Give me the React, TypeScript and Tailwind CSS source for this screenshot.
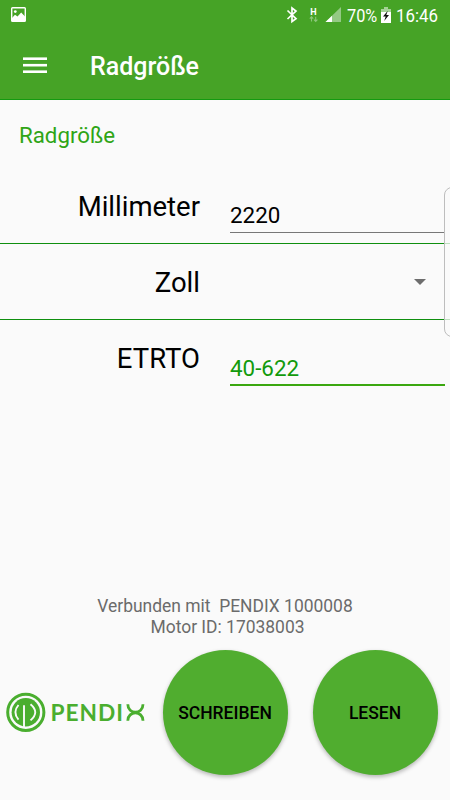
import React from "react";

const roboto = "font-['Roboto','Liberation_Sans',sans-serif]";

function StatusBar() {
  return (
    <div className="relative flex h-8 items-center justify-between pl-[11px] pr-3 text-white">
      <svg width="15" height="15" viewBox="0 0 15 15" className="-mt-[3px]">
        <rect x="0.7" y="0.7" width="13.6" height="13.6" rx="0.8" fill="none" stroke="#fff" strokeWidth="1.4" />
        <circle cx="4.3" cy="4.6" r="1.4" fill="#fff" />
        <path d="M1 11 L4 7.8 L6.5 9.6 L10.2 5.5 L14 9.5 V14 H1 Z" fill="#fff" />
      </svg>
      <div className="flex h-full items-center">
        <svg width="100" height="32" viewBox="282 0 100 32" className="-mr-[35px]">
          <path d="M287.5 10.5 L296 18.6 L292 21.5 V8 L296 11 L287.5 19" fill="none" stroke="#fff" strokeWidth="1.7" />
          <text x="310.3" y="15" fontSize="9" fontWeight="700" fill="#fff" fontFamily="Roboto, sans-serif">H</text>
          <path d="M311.5 21.5 V17 M309.8 18.7 L311.5 16.8 L313.2 18.7 M315.7 16.8 V21.3 M314 19.6 L315.7 21.5 L317.4 19.6" fill="none" stroke="#8cc77a" strokeWidth="1.1" />
          <path d="M325.5 22 L341 7 V22 Z" fill="#94c984" />
          <path d="M325.5 22 L332 15.7 V22 Z" fill="#fff" />
        </svg>
        <span className="w-[34px] origin-left scale-x-[0.88] text-[18.5px] leading-8">70%</span>
        <svg width="10" height="16" viewBox="0 0 10 16" className="mr-[5px] -mt-[2px]">
          <path d="M3 0 H7 V2 H10 V5 H0 V2 H3 Z" fill="#a5d297" />
          <path d="M0 5 H10 V16 H0 Z" fill="#fff" />
          <path d="M6.8 3.8 L2 9.5 H4.7 L3.2 14 L8 8 H5.3 Z" fill="#111" />
        </svg>
        <span className="w-[42px] origin-left scale-x-[0.91] text-[18.5px] leading-8">16:46</span>
      </div>
    </div>
  );
}

function Logo() {
  return (
    <div className="-mt-[2px] flex h-10 w-[139px] items-center text-[#4aae2f]" aria-label="PENDIX">
      <svg width="40" height="40" viewBox="0 0 40 40" fill="none">
        <circle cx="19.8" cy="20.3" r="18.1" stroke="currentColor" strokeWidth="3" />
        <circle cx="19.8" cy="20.3" r="14.2" fill="currentColor" />
        <path d="M12.5 13 Q6.2 20.3 12.5 27.6" stroke="#fafafa" strokeWidth="1.9" />
        <path d="M18 35 V13.2" stroke="#fafafa" strokeWidth="1.9" />
        <path d="M24.5 12.2 Q34 20.3 24.5 28.4" stroke="#fafafa" strokeWidth="1.9" />
      </svg>
      <svg width="99" height="40" viewBox="46 691.5 99 40" fill="none" stroke="currentColor">
        <text x="50.6" y="720" fontSize="22.7" fontWeight="700" textLength="72.3" fill="currentColor" stroke="none" fontFamily="Lato, sans-serif">PENDI</text>
        <path d="M127.8 703.8 C127.8 714.3 143 714.3 143 703.8" strokeWidth="2.8" />
        <path d="M127.8 720.3 C127.8 709.8 143 709.8 143 720.3" strokeWidth="2.8" />
      </svg>
    </div>
  );
}

function Row({ label, children }: { label: string; children: React.ReactNode }) {
  return (
    <div className="flex h-full">
      <div className="w-[200px] pt-[23px] text-right text-[27.5px] leading-8 text-black">{label}</div>
      <div className="ml-[30px] w-[215px]">{children}</div>
    </div>
  );
}

function RoundButton({ label }: { label: string }) {
  return (
    <button className="size-[125px] rounded-full bg-[#50ad2f] pt-[2px] text-[17.5px] font-medium text-black shadow-[0_2px_4px_rgba(0,0,0,0.28)]">
      {label}
    </button>
  );
}

export default function App() {
  return (
    <div className={`relative flex h-[800px] w-[450px] flex-col overflow-hidden bg-[#fafafa] ${roboto}`}>
      <header className="h-[100px] border-b border-[#149a10] bg-[#46a326]">
        <StatusBar />
        <div className="flex h-[67px] items-center pl-[23px] text-white">
          <svg width="24" height="17" viewBox="0 0 24 17" fill="#fff">
            <rect y="0.4" width="24" height="2.6" />
            <rect y="6.9" width="24" height="2.6" />
            <rect y="13.4" width="24" height="2.6" />
          </svg>
          <h1 className="ml-[43px] pt-[2px] text-[25px] font-medium">Radgröße</h1>
        </div>
      </header>
      <h2 className="h-[68px] pl-[19px] pt-5 text-[22.3px] leading-[30px] text-[#2fa516]">Radgröße</h2>
      <div className="h-[76px] border-b border-[#0f8f0f]">
        <Row label="Millimeter">
          <div className="h-[64.5px] border-b border-[#777] pt-8 text-[22.4px] leading-[31px] text-black">2220</div>
        </Row>
      </div>
      <div className="h-[76px] border-b border-[#0f8f0f]">
        <Row label="Zoll">
          <svg width="12" height="6" viewBox="0 0 12 6" className="ml-[184px] mt-[35px]">
            <path d="M0 0 H12 L6 6 Z" fill="#6d6d6d" />
          </svg>
        </Row>
      </div>
      <div className="h-[76px]">
        <Row label="ETRTO">
          <div className="h-[66px] border-b-2 border-[#3aa70f] pt-[33px] text-[22.4px] leading-[30px] text-[#129a0c]">40-622</div>
        </Row>
      </div>
      <div className="mt-auto text-center text-[17.45px] leading-[21px] text-[#6b6b6b]">
        <p className="whitespace-pre">Verbunden mit  PENDIX 1000008</p>
        <p className="pl-[5px]">Motor ID: 17038003</p>
      </div>
      <div className="mb-[25px] mt-[12px] flex items-center pl-[6px]">
        <Logo />
        <div className="ml-[17.5px] flex gap-[25px]">
          <RoundButton label="SCHREIBEN" />
          <RoundButton label="LESEN" />
        </div>
      </div>
      <div className="absolute left-[444px] top-[187px] h-[150px] w-5 rounded-lg border border-[#bdbdbd] bg-[#fafafa]/75" />
    </div>
  );
}
